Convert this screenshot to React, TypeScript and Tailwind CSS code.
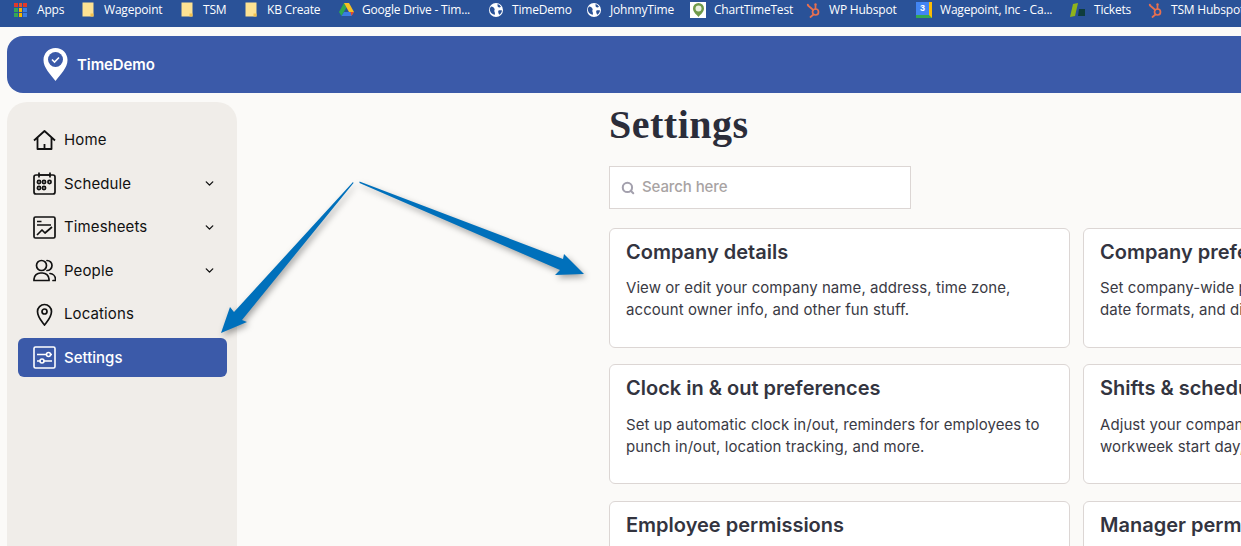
import { ChevronDown, Search } from "lucide-react";

function Folder() {
  return (
    <svg width="12" height="15" viewBox="0 0 12 15">
      <path d="M0.500 0.500h11v14h-11z" fill="#fde293" />
      <path d="M8.500 14.500v-3h3v3z" fill="#f2c04d" />
    </svg>
  );
}

function Globe() {
  return (
    <svg width="14" height="14" viewBox="0 0 14 14">
      <circle cx="7" cy="7" r="7" fill="#fff" />
      <path d="M2 3.500c2 .3 3 1 3.600 2.400.4 1-.6 1.300-.3 2.300.3.8.9 1.200.6 3.600C3.500 11.500 1 9.500.8 6.500.8 5.400 1.300 4.400 2 3.500zM8.500 1c1.500.5 2.800 1.500 3.500 2.800-1 .8-2.300.7-3 .1C8.200 3.200 8.800 2 8.500 1zM9.500 7.500c1-.5 2.500-.5 3.500 0-.2 1.800-1.200 3.400-2.800 4.300-.3-1-1.700-3-.7-4.300z" fill="#2a5298" />
    </svg>
  );
}

function Hubspot() {
  return (
    <svg width="15" height="16" viewBox="0 0 15 16" fill="none" stroke="#e8704f" strokeWidth="1.700" strokeLinecap="round">
      <circle cx="9.500" cy="10" r="3" />
      <path d="M9.500 7V3.500M7.300 8 2 3.500M7.500 12.500 4.500 15" />
      <circle cx="1.800" cy="2.800" r="1" fill="#e8704f" stroke="none" />
      <circle cx="9.500" cy="2.500" r="1.200" fill="#e8704f" stroke="none" />
    </svg>
  );
}

function AppsGrid() {
  const colors = ["#e0392b", "#e8512a", "#e0392b", "#35a853", "#f5b400", "#3b7de0", "#35a853", "#f5b400", "#3b7de0"];
  return (
    <div className="grid grid-cols-3 gap-px w-[13px] h-[14px]">
      {colors.map((c, i) => (
        <span key={i} style={{ backgroundColor: c }} />
      ))}
    </div>
  );
}

function Drive() {
  return (
    <svg width="15" height="13" viewBox="0 0 15 13">
      <path d="M5 0 0 9l2.500 4L7.500 4.500z" fill="#2fa84f" />
      <path d="M5 0h5l5 9H10z" fill="#f8c022" />
      <path d="M2.500 13h10l2.500-4H5z" fill="#3b7de0" />
      <path d="M15 9h-3.500l1 4z" fill="#e2472f" />
    </svg>
  );
}

function ChartFav() {
  return (
    <div className="w-4 h-4 bg-white flex items-center justify-center">
      <svg width="11" height="14" viewBox="0 0 11 14">
        <path d="M5.500 0a5.500 5.500 0 0 1 5.500 5.500C11 9 7.500 11.500 5.500 14 3.500 11.500 0 9 0 5.500A5.500 5.500 0 0 1 5.500 0z" fill="#6f9a4a" />
        <circle cx="5.500" cy="5.500" r="3" fill="#e8f0df" />
      </svg>
    </div>
  );
}

function CalFav() {
  return (
    <div className="w-4 h-4 bg-[#4285f4] border-r-[3px] border-r-[#fbbc04] border-b-[3px] border-b-[#34a853] flex items-center justify-center text-[9px] font-bold leading-none text-white font-['Liberation_Sans',sans-serif]">
      3
    </div>
  );
}

function TicketsFav() {
  return (
    <svg width="16" height="14" viewBox="0 0 16 14">
      <path d="M3 1l5-1-3 13-5 1z" fill="#8fb31c" />
      <path d="M9 6h6v7H8z" fill="#0f3d3e" />
    </svg>
  );
}

const bookmarks = [
  { icon: <AppsGrid />, label: "Apps", cls: "w-[82px] pl-[14px] gap-[10px]" },
  { icon: <Folder />, label: "Wagepoint", cls: "w-[99px] gap-[10px]" },
  { icon: <Folder />, label: "TSM", cls: "w-[64px] gap-[10px]" },
  { icon: <Folder />, label: "KB Create", cls: "w-[94px] gap-[10px]" },
  { icon: <Drive />, label: "Google Drive - Tim...", cls: "w-[150px] gap-[8px]" },
  { icon: <Globe />, label: "TimeDemo", cls: "w-[98px] gap-[9px]" },
  { icon: <Globe />, label: "JohnnyTime", cls: "w-[103px] gap-[9px]" },
  { icon: <ChartFav />, label: "ChartTimeTest", cls: "w-[116px] gap-[8px]" },
  { icon: <Hubspot />, label: "WP Hubspot", cls: "w-[110px] gap-[8px]" },
  { icon: <CalFav />, label: "Wagepoint, Inc - Ca...", cls: "w-[154px] gap-[8px]" },
  { icon: <TicketsFav />, label: "Tickets", cls: "w-[78px] gap-[8px]" },
  { icon: <Hubspot />, label: "TSM Hubspot", cls: "w-[110px] gap-[8px]" },
];

function HomeIcon() {
  return (
    <svg width="23" height="20" viewBox="0 0 23 20" fill="none" stroke="currentColor" strokeWidth="1.800" strokeLinejoin="round">
      <path d="M1 10.500 11.500 1 22 10.500M4.500 8v11h14V8M11.500 19v-5" />
    </svg>
  );
}

function ScheduleIcon() {
  return (
    <svg width="23" height="23" viewBox="0 0 23 23" fill="none" stroke="currentColor" strokeWidth="1.700">
      <rect x="1" y="3" width="21" height="19" rx="2" />
      <path d="M6 0.500v5M17 0.500v5M6 3h11" />
      <circle cx="6" cy="10" r="1.600" />
      <circle cx="11" cy="10" r="1.600" />
      <circle cx="16.500" cy="10" r="1.600" />
      <circle cx="6" cy="16" r="1.600" />
      <circle cx="11" cy="16" r="1.600" />
    </svg>
  );
}

function TimesheetsIcon() {
  return (
    <svg width="23" height="23" viewBox="0 0 23 23" fill="none" stroke="currentColor" strokeWidth="1.700" strokeLinejoin="round">
      <rect x="1" y="1" width="21" height="21" rx="1.500" />
      <path d="M4 5.500h4.500M4 9h14M4 19l5-5 3 3 7-6" />
    </svg>
  );
}

function PeopleIcon() {
  return (
    <svg width="23" height="23" viewBox="0 0 23 23" fill="none" stroke="currentColor" strokeWidth="1.700" strokeLinecap="round">
      <circle cx="8.500" cy="6.500" r="5" />
      <path d="M1 21.500v-1.500a6.500 6.500 0 0 1 6.500-6h2a6.500 6.500 0 0 1 6.500 6v1.500zM14 1.500a5 5 0 0 1 0 10M17 14.500a6 6 0 0 1 5.500 5.500v1.500H20" />
    </svg>
  );
}

function PinIcon() {
  return (
    <svg width="23" height="23" viewBox="0 0 23 23" fill="none" stroke="currentColor" strokeWidth="1.700">
      <path d="M11.500 22C8 17.500 4.500 14 4.500 8.500a7 7 0 0 1 14 0C18.500 14 15 17.500 11.500 22z" />
      <circle cx="11.500" cy="8.500" r="2.500" />
    </svg>
  );
}

function SettingsIcon() {
  return (
    <svg width="23" height="23" viewBox="0 0 23 23" fill="none" stroke="currentColor" strokeWidth="1.600">
      <rect x="1" y="1" width="21" height="21" rx="1.500" />
      <path d="M4 8.500h9.500M17.500 8.500H19M4 15h3M11 15h8" />
      <circle cx="15.500" cy="8.500" r="2" />
      <circle cx="9" cy="15" r="2" />
    </svg>
  );
}

const nav = [
  { label: "Home", icon: <HomeIcon />, more: false },
  { label: "Schedule", icon: <ScheduleIcon />, more: true },
  { label: "Timesheets", icon: <TimesheetsIcon />, more: true },
  { label: "People", icon: <PeopleIcon />, more: true },
  { label: "Locations", icon: <PinIcon />, more: false },
  { label: "Settings", icon: <SettingsIcon />, more: false, active: true },
];

const cards = [
  { title: "Company details", text: "View or edit your company name, address, time zone,\naccount owner info, and other fun stuff." },
  { title: "Company preferences", text: "Set company-wide preferences like your company's\ndate formats, and display options here." },
  { title: "Clock in & out preferences", text: "Set up automatic clock in/out, reminders for employees to\npunch in/out, location tracking, and more." },
  { title: "Shifts & schedules", text: "Adjust your company's overtime rules and default breaks,\nworkweek start day, and scheduling options." },
  { title: "Employee permissions", text: "" },
  { title: "Manager permissions", text: "" },
];

export default function App() {
  return (
    <div className="relative w-[1241px] h-[546px] overflow-hidden bg-[#fbfaf8] font-['Inter',sans-serif]">
      <div className="h-[27px] pb-[8px] bg-[#2a5298] flex items-center overflow-hidden whitespace-nowrap text-[12px] text-white font-['Open_Sans',sans-serif] tracking-[-0.2px]">
        {bookmarks.map((b) => (
          <div key={b.label} className={`flex items-center shrink-0 ${b.cls}`}>
            {b.icon}
            <span>{b.label}</span>
          </div>
        ))}
      </div>

      <header className="mt-[9px] ml-[7px] h-[57px] bg-[#3b5aa9] rounded-l-[16px] flex items-center pl-[36px] gap-[10px] text-white">
        <svg width="25" height="33" viewBox="0 0 25 33">
          <path d="M12.500 0C19.500 0 24.500 5.500 24.500 12c0 8-7 14-12 21C7.500 26 .5 20 .5 12 .5 5.500 5.500 0 12.500 0z" fill="#fff" />
          <circle cx="12.500" cy="11.500" r="7.500" fill="#3b5aa9" />
          <path d="M9 11.500l2.500 2.500 4.500-4.500" fill="none" stroke="#fff" strokeWidth="1.600" />
        </svg>
        <span className="-ml-[1px] pt-[2px] text-[15px] font-semibold tracking-[-0.1px]">TimeDemo</span>
      </header>

      <div className="flex mt-[9px] ml-[7px]">
        <aside className="w-[230px] h-[444px] shrink-0 bg-[#f0ede9] rounded-t-[20px] pt-[18.500px] pl-[11px] pr-[10px] flex flex-col gap-[4.500px]">
          {nav.map((n) => (
            <div
              key={n.label}
              className={`h-[39px] flex items-center rounded-[6px] pl-[15px] pr-[11px] gap-[8px] text-[15px] ${
                n.active ? "bg-[#3b5aa9] text-white font-medium" : "text-[#111] tracking-[0.12px]"
              }`}
            >
              <span className="w-[23px] flex justify-center">{n.icon}</span>
              <span className="flex-1 pt-px">{n.label}</span>
              {n.more && <ChevronDown size={13} strokeWidth={2.500} />}
            </div>
          ))}
        </aside>

        <main className="pl-[372px] shrink-0">
          <h1 className="text-[40px] leading-[48px] -mt-[1px] font-bold tracking-[0.5px] text-[#2b2d3a] font-['Liberation_Serif',serif]">Settings</h1>
          <div className="mt-[17px] w-[302px] h-[43px] bg-white border border-[#dcd6d4] flex items-center pl-[11px] gap-[7px] text-[15px] font-medium tracking-[-0.1px] text-[#a8a3a3]">
            <Search size={14} strokeWidth={3.500} className="text-[#a3a0ad]" />
            <span>Search here</span>
          </div>
          <div className="mt-[19px] grid grid-cols-[461px_461px] gap-x-[13px] gap-y-[16.300px]">
            {cards.map((c) => (
              <div key={c.title} className="h-[120px] bg-white border border-[#dcd6d4] rounded-[6px] px-[16px] pt-[9px]">
                <h2 className="text-[20px] leading-[28px] font-semibold text-[#33343f] whitespace-nowrap">{c.title}</h2>
                <p className="mt-[11.400px] text-[15px] leading-[22px] tracking-[0.07px] whitespace-pre-line text-[#3a3a44]">{c.text}</p>
              </div>
            ))}
          </div>
        </main>
      </div>

      <svg
        width="400"
        height="170"
        viewBox="0 0 400 170"
        className="absolute left-[200px] top-[175px] drop-shadow-[2px_3px_3px_rgba(0,0,0,0.35)]"
      >
        <path d="M153 7 153.500 8 42 145 47 147 21 158 30 132 34 137z" fill="#0070bb" />
        <path d="M159.500 6.500 363 84 364 79 384 99 355 100 360 95 159.500 8z" fill="#0070bb" />
      </svg>
    </div>
  );
}
